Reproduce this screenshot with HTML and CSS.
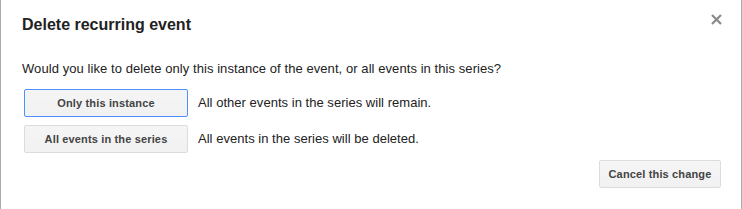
FILE: index.html
```html
<!DOCTYPE html>
<html>
<head>
<meta charset="utf-8">
<link rel="stylesheet" href="styles.css">
</head>
<body>
<div class="dialog">
  <div class="dialog-title">Delete recurring event</div>
  <span class="dialog-close" aria-label="Close">
    <svg width="11" height="11" viewBox="0 0 11 11"><path d="M1 1 L10 10 M10 1 L1 10" stroke="#8a8a8a" stroke-width="2.2" fill="none"/></svg>
  </span>
  <div class="dialog-question">Would you like to delete only this instance of the event, or all events in this series?</div>
  <div class="options">
    <div class="option">
      <button class="btn btn-focused">Only this instance</button>
      <span class="option-desc">All other events in the series will remain.</span>
    </div>
    <div class="option">
      <button class="btn">All events in the series</button>
      <span class="option-desc">All events in the series will be deleted.</span>
    </div>
  </div>
  <div class="dialog-footer">
    <button class="btn btn-cancel">Cancel this change</button>
  </div>
</div>
</body>
</html>
```

FILE: styles.css
```css
html, body {
  margin: 0;
  padding: 0;
  background: #fff;
}
.dialog {
  position: relative;
  box-sizing: border-box;
  width: 742px;
  height: 209px;
  border-left: 1px solid #acacac;
  border-right: 1px solid #acacac;
  padding: 15px 20px 0 21px;
  font-family: "Liberation Sans", Arial, sans-serif;
  color: #222;
}
.dialog-title {
  font-size: 16px;
  font-weight: bold;
  line-height: 20px;
}
.dialog-close {
  position: absolute;
  top: 14px;
  right: 19px;
  width: 11px;
  height: 11px;
  display: block;
}
.dialog-close svg {
  display: block;
}
.dialog-question {
  margin-top: 26px;
  font-size: 13px;
  line-height: 16px;
  letter-spacing: 0.07px;
}
.options {
  margin-top: 12px;
  display: flex;
  flex-direction: column;
  gap: 8px;
  padding-left: 2px;
}
.option {
  display: flex;
  align-items: center;
  gap: 10px;
}
.option-desc {
  font-size: 13px;
  line-height: 16px;
  letter-spacing: 0.03px;
}
.btn {
  box-sizing: border-box;
  height: 28px;
  width: 164px;
  padding: 0 8px;
  margin: 0;
  border: 1px solid #dcdcdc;
  border-radius: 2px;
  background: linear-gradient(#f5f5f5, #f1f1f1);
  color: #444;
  font-family: "Liberation Sans", Arial, sans-serif;
  font-size: 11px;
  font-weight: bold;
  letter-spacing: 0.15px;
  text-align: center;
  cursor: default;
}
.btn-focused {
  border-color: #4d90fe;
}
.dialog-footer {
  margin-top: 7px;
  display: flex;
  justify-content: flex-end;
}
.btn-cancel {
  width: 122px;
}
```
